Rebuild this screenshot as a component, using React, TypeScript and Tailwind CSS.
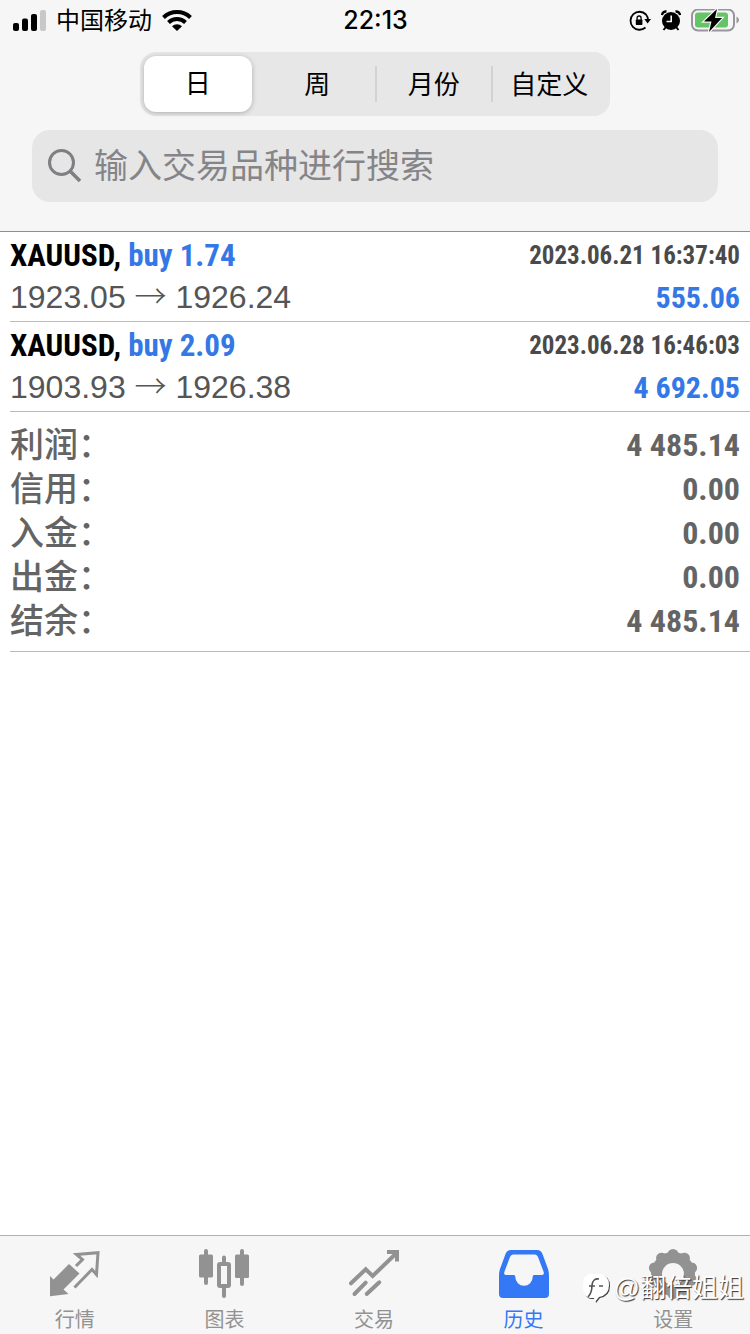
import { useState, type ReactNode } from 'react'

const periods = ['日', '周', '月份', '自定义']

const deals = [
  { symbol: 'XAUUSD', side: 'buy 1.74', open: '1923.05', close: '1926.24', time: '2023.06.21 16:37:40', profit: '555.06' },
  { symbol: 'XAUUSD', side: 'buy 2.09', open: '1903.93', close: '1926.38', time: '2023.06.28 16:46:03', profit: '4 692.05' },
]

const totals = [
  { label: '利润', value: '4 485.14' },
  { label: '信用', value: '0.00' },
  { label: '入金', value: '0.00' },
  { label: '出金', value: '0.00' },
  { label: '结余', value: '4 485.14' },
]

const NARROW = "font-['Roboto_Condensed','Liberation_Sans',sans-serif]"

function Icon({ children }: { children: ReactNode }) {
  return (
    <svg viewBox="0 0 50 50" className="size-[50px]" fill="currentColor" aria-hidden="true">
      {children}
    </svg>
  )
}

const tabs = [
  {
    label: '行情',
    icon: (
      <Icon>
        <path d="M-1 26 3.5 30.5 19 15 29.5 24.5 13.5 40.5 18.500 45 -1 47.500Z" />
        <path d="M26 17 32.5 10.5 26.5 5.5 48 3.7 46.5 25.5 42 20.5 24.5 38.5" fill="none" stroke="currentColor" strokeWidth="3" />
      </Icon>
    ),
  },
  {
    label: '图表',
    icon: (
      <Icon>
        <rect x="0" y="5.5" width="14" height="23" rx="1.5" />
        <rect x="5" y="0" width="4" height="36" rx="2" />
        <rect x="20" y="15" width="10" height="22" rx="1" fill="none" stroke="currentColor" strokeWidth="4" />
        <rect x="23" y="6.5" width="4" height="8" rx="2" />
        <rect x="23" y="37" width="4" height="12" rx="2" />
        <rect x="36" y="5.5" width="14" height="23.5" rx="1.5" />
        <rect x="41" y="0" width="4" height="37" rx="2" />
      </Icon>
    ),
  },
  {
    label: '交易',
    icon: (
      <Icon>
        <g fill="none" stroke="currentColor" strokeWidth="4">
          <path d="M2 34.3 16.7 20.3 23.7 27 47 4.5" strokeLinecap="round" />
          <path d="M38 3H48V12.5" />
          <path d="M5.5 45 16.7 33.7M17.7 45 30.3 33.3" strokeLinecap="round" />
        </g>
      </Icon>
    ),
  },
  {
    label: '历史',
    icon: (
      <Icon>
        <path
          fillRule="evenodd"
          d="M12 1H38Q42 1 43.5 5L49 20Q50 23 50 27V45Q50 49 46 49H4Q0 49 0 45V27Q0 23 1 20L6.5 5Q8 1 12 1ZM14 5.5Q12 5.5 11 8L5.3 23Q4.5 26 7 26H15Q16.3 26 16.3 28A8.7 8.7 0 0 0 33.7 28Q33.7 26 35 26H43Q45.5 26 44.7 23L39 8Q38 5.5 36 5.5Z"
        />
      </Icon>
    ),
  },
  {
    label: '设置',
    icon: (
      <Icon>
        <circle cx="25" cy="25" r="16.5" fill="none" stroke="currentColor" strokeWidth="11" />
        {[0, 36, 72, 108, 144, 180, 216, 252, 288, 324].map(a => (
          <circle key={a} cx="25" cy="5.5" r="5.5" transform={`rotate(${a} 25 25)`} />
        ))}
      </Icon>
    ),
  },
]

function StatusBar() {
  return (
    <div className="grid h-10 grid-cols-[1fr_auto_1fr] items-center pt-0.5 pr-[11px] pl-3">
      <div className="flex items-center gap-2.5">
        <svg viewBox="0 0 34 22" className="h-[22px] w-[34px]" aria-hidden="true">
          <rect x="1" y="13" width="6" height="8" rx="2" />
          <rect x="10" y="8.5" width="6" height="12.5" rx="2" />
          <rect x="19" y="4" width="6" height="17" rx="2" />
          <rect x="28" y="0" width="6" height="21" rx="2" fill="#c8c8c8" />
        </svg>
        <span className="text-2xl">中国移动</span>
        <svg viewBox="0 0 30 22" className="h-[22px] w-[30px]" fill="none" stroke="#000" strokeWidth="4" aria-hidden="true">
          <path d="M1.5 7.5A19.5 19.5 0 0 1 28.5 7.5" />
          <path d="M6.5 12.5A12.3 12.3 0 0 1 23.5 12.5" />
          <path d="M10 16.2A7.2 7.2 0 0 1 20 16.2L15 21Z" fill="#000" stroke="none" />
        </svg>
      </div>
      <time className="font-['Inter','Liberation_Sans',sans-serif] text-[25px] font-medium">22:13</time>
      <div className="flex items-center justify-end gap-2.5">
        <svg viewBox="0 0 22 22" className="size-[22px]" aria-hidden="true">
          <path d="M17 4.5A9 9 0 1 0 16.5 17.5M17 4.5A9 9 0 0 1 19 9.5" fill="none" stroke="#000" strokeWidth="1.8" />
          <path d="M15.3 9H22L18.6 13.5Z" />
          <rect x="6.8" y="9.5" width="6.6" height="5.5" rx="0.8" />
          <path d="M8.1 10V8a2 2 0 0 1 4 0V10" fill="none" stroke="#000" strokeWidth="1.3" />
        </svg>
        <svg viewBox="0 0 20 22" className="h-[22px] w-[20px]" aria-hidden="true">
          <circle cx="10" cy="11" r="9" />
          <path d="M1 5A4 4 0 0 1 5.5 1.5M14.5 1.5A4 4 0 0 1 19 5" fill="none" stroke="#000" strokeWidth="2.4" />
          <path d="M4.5 17.5 2.5 20M15.5 17.5 17.5 20" stroke="#000" strokeWidth="2" />
          <path d="M10.2 5.5V11.5H5.5" fill="none" stroke="#f6f6f6" strokeWidth="1.6" />
        </svg>
        <svg viewBox="0 0 48 24" className="h-[24px] w-[48px]" aria-hidden="true">
          <rect x="1" y="0.5" width="42" height="21" rx="6" fill="none" stroke="#98969c" strokeWidth="2" />
          <path d="M45.5 7.5Q48 8.5 48 11T45.5 14.5Z" fill="#98969c" />
          <rect x="4" y="3.5" width="33" height="15" rx="3" fill="#65c466" />
          <path d="M26 0 13 12.5H20.5L18 23 31 9H24Z" stroke="#f6f6f6" strokeWidth="2.4" paintOrder="stroke" />
        </svg>
      </div>
    </div>
  )
}

export default function App() {
  const [period, setPeriod] = useState('日')
  const [tab, setTab] = useState('历史')
  const [query, setQuery] = useState('')

  return (
    <div className="flex min-h-screen flex-col bg-white font-['Liberation_Sans','Noto_Sans_CJK_SC',sans-serif] text-black">
      <header className="border-b border-[#8e8e8e] bg-[#f6f6f6]">
        <StatusBar />

        <div className="mx-auto mt-3 grid h-16 w-[470px] max-w-full grid-cols-4 items-center rounded-2xl bg-[#e7e7e7] p-1">
          {periods.map((p, i) => (
            <button
              key={p}
              type="button"
              aria-pressed={p === period}
              onClick={() => setPeriod(p)}
              className={
                p === period
                  ? 'mr-2 h-14 rounded-xl bg-white text-[26px] shadow-[0_1px_5px_rgba(0,0,0,0.25)]'
                  : i > 1
                    ? 'h-9 border-l-2 border-[#d2d2d2] text-[26px]'
                    : 'h-9 text-[26px]'
              }
            >
              {p}
            </button>
          ))}
        </div>

        <label className="mx-8 mt-3.5 mb-[29px] flex h-18 items-center gap-3 rounded-[18px] bg-[#e6e6e7] px-4">
          <svg viewBox="0 0 34 34" className="size-[34px] shrink-0" fill="none" stroke="#7f7f83" strokeWidth="3" aria-hidden="true">
            <circle cx="13.5" cy="13.5" r="12" />
            <path d="M22 22 32 32" strokeWidth="3.6" />
          </svg>
          <input
            type="search"
            aria-label="搜索"
            value={query}
            onChange={e => setQuery(e.target.value)}
            placeholder="输入交易品种进行搜索"
            className="min-w-0 flex-1 bg-transparent text-[34px] outline-none placeholder:text-[#858588]"
          />
        </label>
      </header>

      <main className="flex-1 pl-2.5">
        <ul>
          {deals.map(d => (
            <li key={d.time} className="border-b border-[#bcbcbc] pt-1 pr-2.5 pb-[3px]">
              <div className={`flex h-10 items-center justify-between font-bold ${NARROW}`}>
                <span className="text-[31px]">
                  {d.symbol}, <span className="text-[#3478e6]">{d.side}</span>
                </span>
                <time className="text-[25px] text-[#4a4a4a]">{d.time}</time>
              </div>
              <div className="flex h-[42px] items-center justify-between">
                <span className="text-[32px] leading-10 text-[#555]">
                  {d.open} <span className="font-['Noto_Sans_CJK_SC',sans-serif] leading-none font-light">→</span> {d.close}
                </span>
                <span className={`text-[30px] font-bold text-[#3478e6] ${NARROW}`}>{d.profit}</span>
              </div>
            </li>
          ))}
        </ul>

        <dl className="border-b border-[#bcbcbc] pt-[11px] pr-2.5 pb-2 leading-[44px] text-[#646464]">
          {totals.map(t => (
            <div key={t.label} className="flex h-11 items-center justify-between">
              <dt className="text-[34px] font-medium">{t.label}：</dt>
              <dd className={`text-[32px] font-bold ${NARROW}`}>{t.value}</dd>
            </div>
          ))}
        </dl>
      </main>

      <nav className="relative grid grid-cols-5 border-t border-[#b0b0b0] bg-[#f6f6f6] pt-[13px] pr-0.5 pb-0.5">
        {tabs.map(t => (
          <button
            key={t.label}
            type="button"
            aria-current={t.label === tab ? 'page' : undefined}
            onClick={() => setTab(t.label)}
            className={`flex flex-col items-center gap-[9px] text-[20px] leading-6 ${t.label === tab ? 'text-[#3478f6]' : 'text-[#929292]'}`}
          >
            {t.icon}
            <span>{t.label}</span>
          </button>
        ))}

        {/* Author mark over the tab bar */}
        <div className="pointer-events-none absolute right-1.5 bottom-7 flex items-center gap-1 text-[26px] leading-9 text-white [text-shadow:1px_1px_1px_#333]">
          <svg viewBox="0 0 28 32" className="h-[32px] w-[28px] drop-shadow-[1px_1px_0_#444]" aria-hidden="true">
            <path d="M8 2H18Q27 3 27 13Q27 23 17 25L13 30L12 26H8Q1 25 1 14Q1 3 8 2Z" fill="#fff" />
            <path d="M6 25Q10 21 10 13Q11 6 17 7M7 14H13M17 14H21" fill="none" stroke="#555" strokeWidth="1.6" />
          </svg>
          <span>@翻倍姐姐</span>
        </div>
      </nav>
    </div>
  )
}
